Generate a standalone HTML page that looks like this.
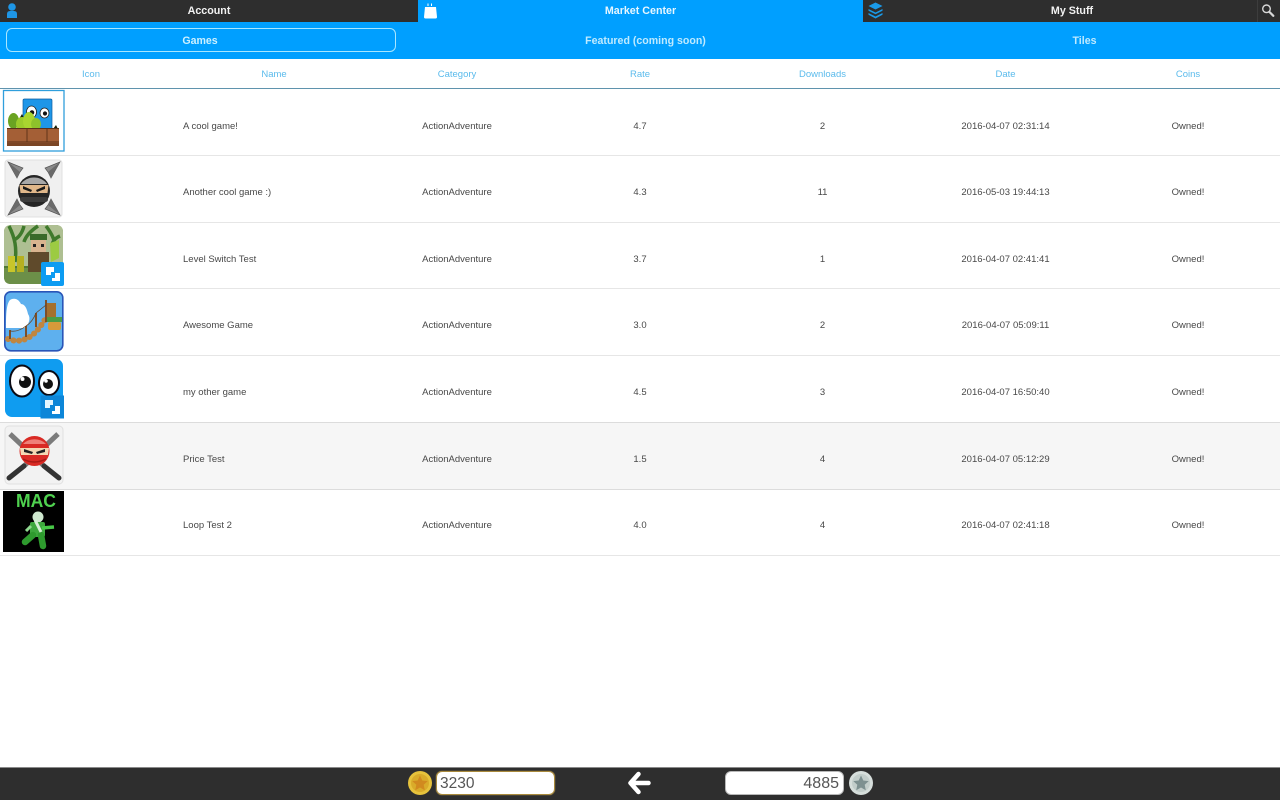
<!DOCTYPE html>
<html><head><meta charset="utf-8"><title>Market Center</title>
<style>
html,body{margin:0;padding:0;width:1280px;height:800px;overflow:hidden;background:#fff;font-family:"Liberation Sans",sans-serif}
#p{position:absolute;left:0;top:0;width:1280px;height:800px;overflow:hidden;background:#fff;filter:blur(.35px)}
.a{position:absolute}
.t{position:absolute;white-space:nowrap;transform:translateX(-50%)}
.bar{height:22px;top:0;background:#2e2e2e}
.tab{top:1px;line-height:21px;font-size:10.7px;font-weight:bold;color:#f2f2f2}
.sub{top:23px;line-height:37px;font-size:10.6px;font-weight:bold;color:#bfeaff}
.h{top:60px;line-height:29px;font-size:9.5px;color:#5bbbec}
.c{font-size:9.5px;color:#484848;line-height:12px;margin-top:1px}
.line{left:0;width:1280px;height:1px;background:#e6e6e6}
.input{background:#fff;border-radius:6px;height:22px;line-height:23px;font-size:16px;color:#555}
</style></head>
<body><div id="p">
<!-- top tabs -->
<div class="a bar" style="left:0;width:418px"></div>
<div class="a" style="left:418px;top:0;width:445px;height:22px;background:#009fff"></div>
<div class="a bar" style="left:863px;width:417px"></div>
<div class="a" style="left:1257px;top:0;width:1px;height:22px;background:#3d3d3d"></div>
<div class="t tab" style="left:209px">Account</div>
<div class="t tab" style="left:640.500px;color:#e6f6ff">Market Center</div>
<div class="t tab" style="left:1072px">My Stuff</div>

<svg class="a" style="left:0;top:0" width="1280" height="22" viewBox="0 0 1280 22">
<circle cx="12" cy="7" r="3.800" fill="#1e96e6"/>
<path d="M7 18v-4q0-3 3-3h4q3 0 3 3v4z" fill="#1e96e6"/>
<path d="M425 7h11l1 10q0 1.500-1.500 1.500h-10q-1.500 0-1.500-1.500z" fill="#fff"/>
<path d="M428 6V3.500M431.500 6V3.500" stroke="#fff" stroke-width="1" fill="none"/>
<path d="M875.500 2.500l7 3.500-7 3.500-7-3.500z" fill="#1a9ae8"/>
<path d="M868.500 9l7 3.500 7-3.500v1.800l-7 3.500-7-3.500z" fill="#1a9ae8"/>
<path d="M868.500 13l7 3.500 7-3.500v1.800l-7 3.700-7-3.700z" fill="#1a9ae8"/>
<circle cx="1266.500" cy="8.800" r="3.800" fill="none" stroke="#d8d8d8" stroke-width="1.400"/>
<path d="M1269.500 12l3.800 3.800" stroke="#d8d8d8" stroke-width="2.200" stroke-linecap="round"/>
</svg>

<!-- sub tabs -->
<div class="a" style="left:0;top:22px;width:1280px;height:37px;background:#009fff"></div>
<div class="a" style="left:6px;top:28px;width:388px;height:22px;border:1.500px solid #a8e6ff;border-radius:6px"></div>
<div class="t sub" style="left:200px;color:#cdf0ff">Games</div>
<div class="t sub" style="left:645.500px">Featured (coming soon)</div>
<div class="t sub" style="left:1084.500px">Tiles</div>

<!-- header -->
<div class="t h" style="left:91px">Icon</div>
<div class="t h" style="left:274px">Name</div>
<div class="t h" style="left:457px">Category</div>
<div class="t h" style="left:640px">Rate</div>
<div class="t h" style="left:822.500px">Downloads</div>
<div class="t h" style="left:1005.500px">Date</div>
<div class="t h" style="left:1188px">Coins</div>
<div class="a" style="left:0;top:88px;width:1280px;height:1px;background:#5f93ad"></div>

<!-- row separators -->
<div class="a" style="left:0;top:423px;width:1280px;height:66px;background:#f6f6f6"></div>
<div class="a line" style="top:155px"></div>
<div class="a line" style="top:222px"></div>
<div class="a line" style="top:288px"></div>
<div class="a line" style="top:355px"></div>
<div class="a line" style="top:422px;background:#dcdcdc"></div>
<div class="a line" style="top:489px;background:#dcdcdc"></div>
<div class="a line" style="top:555px"></div>

<!-- rows -->
<div class="a c" style="left:183px;top:120px">A cool game!</div>
<div class="t c" style="left:457px;top:120px">ActionAdventure</div>
<div class="t c" style="left:640px;top:120px">4.7</div>
<div class="t c" style="left:822.500px;top:120px">2</div>
<div class="t c" style="left:1005.500px;top:120px">2016-04-07 02:31:14</div>
<div class="t c" style="left:1188px;top:120px">Owned!</div>

<div class="a c" style="left:183px;top:186px">Another cool game :)</div>
<div class="t c" style="left:457px;top:186px">ActionAdventure</div>
<div class="t c" style="left:640px;top:186px">4.3</div>
<div class="t c" style="left:822.500px;top:186px">11</div>
<div class="t c" style="left:1005.500px;top:186px">2016-05-03 19:44:13</div>
<div class="t c" style="left:1188px;top:186px">Owned!</div>

<div class="a c" style="left:183px;top:253px">Level Switch Test</div>
<div class="t c" style="left:457px;top:253px">ActionAdventure</div>
<div class="t c" style="left:640px;top:253px">3.7</div>
<div class="t c" style="left:822.500px;top:253px">1</div>
<div class="t c" style="left:1005.500px;top:253px">2016-04-07 02:41:41</div>
<div class="t c" style="left:1188px;top:253px">Owned!</div>

<div class="a c" style="left:183px;top:319px">Awesome Game</div>
<div class="t c" style="left:457px;top:319px">ActionAdventure</div>
<div class="t c" style="left:640px;top:319px">3.0</div>
<div class="t c" style="left:822.500px;top:319px">2</div>
<div class="t c" style="left:1005.500px;top:319px">2016-04-07 05:09:11</div>
<div class="t c" style="left:1188px;top:319px">Owned!</div>

<div class="a c" style="left:183px;top:386px">my other game</div>
<div class="t c" style="left:457px;top:386px">ActionAdventure</div>
<div class="t c" style="left:640px;top:386px">4.5</div>
<div class="t c" style="left:822.500px;top:386px">3</div>
<div class="t c" style="left:1005.500px;top:386px">2016-04-07 16:50:40</div>
<div class="t c" style="left:1188px;top:386px">Owned!</div>

<div class="a c" style="left:183px;top:453px">Price Test</div>
<div class="t c" style="left:457px;top:453px">ActionAdventure</div>
<div class="t c" style="left:640px;top:453px">1.5</div>
<div class="t c" style="left:822.500px;top:453px">4</div>
<div class="t c" style="left:1005.500px;top:453px">2016-04-07 05:12:29</div>
<div class="t c" style="left:1188px;top:453px">Owned!</div>

<div class="a c" style="left:183px;top:519px">Loop Test 2</div>
<div class="t c" style="left:457px;top:519px">ActionAdventure</div>
<div class="t c" style="left:640px;top:519px">4.0</div>
<div class="t c" style="left:822.500px;top:519px">4</div>
<div class="t c" style="left:1005.500px;top:519px">2016-04-07 02:41:18</div>
<div class="t c" style="left:1188px;top:519px">Owned!</div>

<!-- game icons -->
<svg class="a" style="left:0;top:0" width="80" height="560" viewBox="0 0 80 560">
<!-- 1 -->
<rect x="3.500" y="90.500" width="60.500" height="60.500" fill="#fff" stroke="#2f9fdc" stroke-width="1.300"/>
<rect x="23" y="99" width="29" height="30" rx="1.500" fill="#1e96e8" stroke="#0d5fa0" stroke-width=".7"/>
<ellipse cx="31.500" cy="112" rx="5" ry="6" fill="#fff" stroke="#222" stroke-width=".8"/>
<circle cx="32" cy="112.500" r="2.300" fill="#111"/>
<ellipse cx="44.500" cy="113" rx="4.500" ry="5" fill="#fff" stroke="#222" stroke-width=".8"/>
<circle cx="45" cy="113.500" r="2.100" fill="#111"/>
<path d="M19 119l3-5 3 6zM53 129l3-4 2 4z" fill="#15200a"/>
<ellipse cx="13.500" cy="121" rx="5.500" ry="8" fill="#6aa322"/>
<ellipse cx="22" cy="124" rx="6" ry="7" fill="#9ccb2c"/>
<ellipse cx="29" cy="121" rx="6" ry="9" fill="#a9d530"/>
<ellipse cx="36" cy="124" rx="5" ry="6" fill="#8dc22b"/>
<rect x="7" y="128" width="52" height="18" fill="#a45f36"/>
<path d="M7 142h52M27 129v13M47 129v13M7 128.500h52" stroke="#5b3118" stroke-width=".9" fill="none"/>
<rect x="7" y="143" width="52" height="3" fill="#7b4524"/>

<!-- 2 -->
<rect x="5" y="160" width="57" height="57" rx="3" fill="#f0f0f0" stroke="#e0e0e0"/>
<path d="M8 162l15 6-3 4-3 6zM60 162l-15 6 3 4 3 6zM8 215l15-6-3-4-3-6zM60 215l-15-6 3-4 3-6z" fill="#8a8a8a" stroke="#555" stroke-width=".7"/>
<path d="M8 162l12 10-3 6zM60 162l-12 10 3 6zM8 215l12-10-3-6zM60 215l-12-10 3-6z" fill="#6a6a6a"/>
<circle cx="34" cy="191" r="16" fill="#252525"/>
<path d="M21 184a15 13 0 0 1 26 0z" fill="#a8a8a8"/>
<path d="M19.500 185h29l-1 8h-27z" fill="#e0b78a"/>
<path d="M23 186l9 4-1 2-8-3zM45 186l-9 4 1 2 8-3z" fill="#1a1a1a"/>
<rect x="20" y="197" width="28" height="5" rx="2.500" fill="#3c3c3c"/>

<!-- 3 -->
<rect x="4" y="225" width="59" height="59" rx="7" fill="#4f7a35"/>
<path d="M4 232q0-7 7-7h45q7 0 7 7v34H4z" fill="#aebf92"/>
<path d="M9 226c6 12 8 22 6 36M24 226c-2 8-6 12-10 14M38 226c-6 4-12 9-14 16M46 226c6 8 9 14 10 24M60 236c-5 2-8 6-8 10" stroke="#3f7a2c" stroke-width="3.500" fill="none"/>
<path d="M4 268h59v9q0 7-7 7H11q-7 0-7-7z" fill="#6c8f48"/>
<rect x="30" y="234" width="17" height="6" fill="#3a6a2a"/>
<rect x="31" y="240" width="15" height="12" fill="#d9b48f"/>
<rect x="33" y="244" width="3" height="3" fill="#222"/><rect x="41" y="244" width="3" height="3" fill="#222"/>
<rect x="28" y="252" width="21" height="20" fill="#5f4a2b"/>
<rect x="8" y="256" width="7" height="16" fill="#c8c62a"/><rect x="17" y="256" width="7" height="16" fill="#b5b020"/>
<path d="M50 243l9-3v18l-8 4z" fill="#9ccb42"/>
<rect x="41" y="262" width="23" height="24" rx="2" fill="#0d9cf2"/>
<path d="M46 267h8v5h-3v3h-5z" fill="#fff"/>
<path d="M60 281h-8v-3h3v-5h5z" fill="#fff"/>

<!-- 4 -->
<rect x="4.800" y="291.800" width="58" height="59" rx="6" fill="#5eb0ee" stroke="#2a55b8" stroke-width="1.600"/>
<path d="M6 328c0-10 0-24 4-28 5-3 9 0 11 4 4 0 6 5 7 10 3 4 1 10-3 14z" fill="#fff"/>
<path d="M8 339c8 3 16 2 23-3s11-12 15-18" fill="none" stroke="#c08640" stroke-width="6" stroke-linecap="round" stroke-dasharray="0.1 5.500"/>
<path d="M10 330v9M26 326v11M36 313v14M46 300v22" stroke="#7c4f28" stroke-width="2"/>
<path d="M10 331c6 1 11-1 16-5M26 326c5-3 8-8 10-13M36 313l10-8" stroke="#6a4422" stroke-width=".8" fill="none"/>
<rect x="47" y="303" width="9" height="15" fill="#a4702f"/>
<rect x="47" y="317" width="15" height="5" fill="#4b9c44"/>
<rect x="48" y="322" width="13" height="8" rx="2" fill="#d79a3a"/>

<!-- 5 -->
<rect x="5" y="359" width="58" height="58" rx="7" fill="#0f9cf0"/>
<ellipse cx="22" cy="381" rx="12" ry="15.500" fill="#fff" stroke="#0a0a14" stroke-width="2"/>
<circle cx="25" cy="382" r="6" fill="#111"/><circle cx="22.500" cy="379" r="2" fill="#fff"/>
<ellipse cx="49" cy="383" rx="10" ry="12" fill="#fff" stroke="#0a0a14" stroke-width="2"/>
<circle cx="48" cy="384" r="5" fill="#111"/><circle cx="46" cy="381" r="1.800" fill="#fff"/>
<rect x="40.500" y="395.500" width="23.500" height="23" fill="#0d86d8"/>
<path d="M45 400h8v5h-3v3h-5z" fill="#e5f6ff"/>
<path d="M60 414h-8v-3h3v-5h5z" fill="#fff"/>

<!-- 6 -->
<rect x="5" y="426" width="58" height="58" rx="4" fill="#f2f2f2" stroke="#e0e0e0"/>
<path d="M10 434l34 32M58 434l-34 32" stroke="#7b7b7b" stroke-width="5"/>
<path d="M44 466l15 12M24 466l-15 12" stroke="#333" stroke-width="5" stroke-linecap="round"/>
<circle cx="34.500" cy="451" r="15" fill="#d92a24"/>
<path d="M23 444a14 11 0 0 1 23 0z" fill="#ef8078"/>
<path d="M20 448h29l-1 7H21z" fill="#f4d8b4"/>
<path d="M24 449l9 3-1 2-8-2zM45 449l-9 3 1 2 8-2z" fill="#222"/>
<path d="M23 459q11 6 23 0" stroke="#a81a16" stroke-width="1.500" fill="none"/>

<!-- 7 -->
<rect x="3" y="491" width="61" height="61" fill="#000"/>
<text x="36" y="507" text-anchor="middle" font-family="Liberation Sans, sans-serif" font-size="18" font-weight="bold" fill="#4fd14f" textLength="40" lengthAdjust="spacingAndGlyphs">MAC</text>
<circle cx="38" cy="517" r="5.500" fill="#cfe8cf"/>
<rect x="30" y="522" width="15" height="15" rx="2" fill="#3ea83e"/>
<path d="M42 528l12-1" stroke="#48c848" stroke-width="3.500"/>
<path d="M33 535l-8 7M41 535l2 11" stroke="#2e9a2e" stroke-width="6.500" stroke-linecap="round"/>
<path d="M31 526l-5 5" stroke="#8fd88f" stroke-width="3"/>
<path d="M35 520l6 12" stroke="#d5efd5" stroke-width="3"/>
</svg>

<!-- footer -->
<div class="a" style="left:0;top:767px;width:1280px;height:33px;background:#2e2e2e;border-top:1px solid #8a8a8a;box-sizing:border-box"></div>
<div class="a input" style="left:436px;top:771px;width:114px;padding-left:3px;font-size:15.500px;border:1px solid #a98a3d;box-shadow:0 0 1px #d7b45a">3230</div>
<div class="a input" style="left:725px;top:771px;width:113px;padding-right:4px;text-align:right;border:1px solid #b8b8b8">4885</div>
<svg class="a" style="left:400px;top:767px" width="480" height="33" viewBox="0 0 480 33">
<circle cx="20" cy="16" r="12" fill="#e6c23c"/>
<circle cx="20" cy="16" r="9" fill="#d9ab2a"/>
<path d="M20 8.500l2.300 5 5.400.600-4 3.700 1.100 5.400-4.800-2.700-4.800 2.700 1.100-5.400-4-3.700 5.400-.600z" fill="#d18a1f"/>
<path d="M238.500 7l-8 9 8 9M232 16h16.500" fill="none" stroke="#fff" stroke-width="4.500" stroke-linecap="round" stroke-linejoin="round"/>
<circle cx="461" cy="16" r="12" fill="#d6dedb"/>
<circle cx="461" cy="16" r="9" fill="#c2cdca"/>
<path d="M461 8.500l2.300 5 5.400.600-4 3.700 1.100 5.400-4.800-2.700-4.800 2.700 1.100-5.400-4-3.700 5.400-.600z" fill="#7d9090"/>
</svg>
</div></body></html>
